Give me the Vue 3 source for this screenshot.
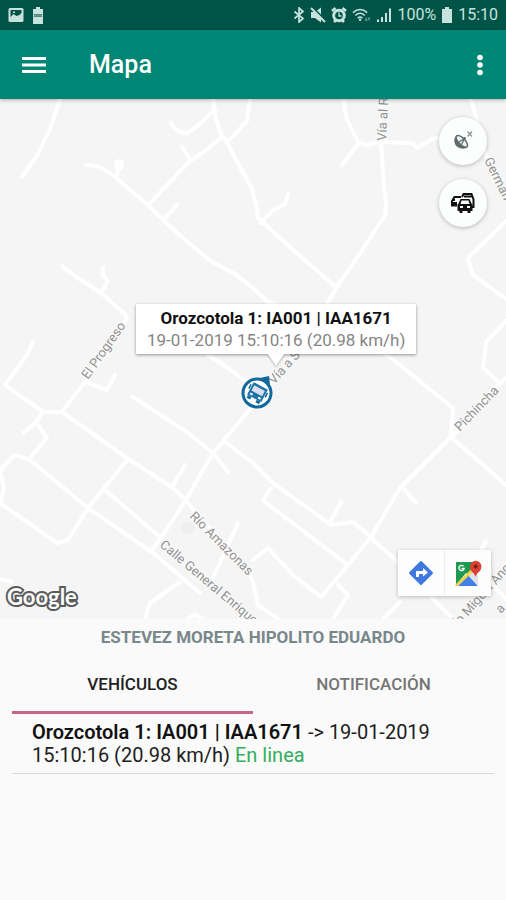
<template>
  <div class="screen">
    <div class="status-bar">
      <div class="status-group">
        <svg class="ic-16" viewBox="0 0 16 16">
          <path fill-rule="evenodd" d="M2 1h12a1.500 1.500 0 0 1 1.500 1.500v11A1.500 1.500 0 0 1 14 15H2a1.500 1.500 0 0 1-1.500-1.500v-11A1.500 1.500 0 0 1 2 1zM2.500 3v7l3-3 3 2 3-1 2-2V3zM5 4.500h2v1.500H5z" />
        </svg>
        <svg class="ic-battery-note" viewBox="0 0 12 17">
          <path d="M4 0h4v2h3v15H1V2h3z" />
          <path d="M2 7l2 3 2-3 2 3 2-3M2 10l2-3 2 3 2-3 2 3" fill="none" stroke="#3f7f75" stroke-width="1" />
        </svg>
      </div>
      <div class="status-group tight">
        <svg class="ic-bt" viewBox="0 0 12 16">
          <path d="M1.500 4.500l8.500 7L6 15V1l4 3.500-8.500 7" fill="none" stroke="currentColor" stroke-width="1.700" />
        </svg>
        <svg class="ic-16" viewBox="0 0 16 16">
          <path d="M1 5h4l6-4.500v15L5 11H1z" />
          <path d="M2 0l14 14" stroke="#005447" stroke-width="2" />
          <path d="M1 1l14 14" stroke="currentColor" stroke-width="2" />
        </svg>
        <svg class="ic-16" viewBox="0 0 16 16">
          <path d="M1 4l3.500-3M15 4l-3.500-3M3 15l2-2M13 15l-2-2" stroke="currentColor" stroke-width="2.600" />
          <circle cx="8" cy="8.500" r="6.800" />
          <circle cx="8" cy="8.500" r="3.800" fill="#005447" />
          <path d="M8 5.500v3.500h2.500" fill="none" stroke="currentColor" stroke-width="1.300" />
        </svg>
        <svg class="ic-wifi" viewBox="0 0 20 16">
          <g fill="none" stroke="currentColor" stroke-width="1.500">
            <path d="M1 5.500q7.500-6.500 15 0" />
            <path d="M3.500 8.500q5-4.500 10 0" />
            <path d="M6 11.300q2.500-2.200 5 0" />
          </g>
          <circle cx="8.500" cy="13" r="1.300" />
          <path d="M13.500 14l1.500-4 1.500 4zM16.500 10.500h3l-1.500 4z" opacity="0.500" />
        </svg>
        <svg class="ic-16" viewBox="0 0 16 16">
          <path d="M1 12.500h2V15H1zM5 10h2v5H5zM9 6h2v9H9zM13 1.500h2V15h-2z" />
        </svg>
        <span class="status-text">100%</span>
        <svg class="ic-battery" viewBox="0 0 12 16">
          <path d="M4 0h4v2h3v14H1V2h3z" />
        </svg>
        <span class="status-text">15:10</span>
      </div>
    </div>

    <header class="app-bar">
      <button class="bar-btn" aria-label="Menú">
        <svg width="24" height="18" viewBox="0 0 24 18">
          <path d="M0 1h24v3H0zM0 7.500h24v3H0zM0 14h24v3H0z" />
        </svg>
      </button>
      <h1 class="app-title">Mapa</h1>
      <button class="bar-btn" aria-label="Más opciones">
        <svg width="8" height="22" viewBox="0 0 8 22">
          <circle cx="4" cy="3.500" r="2.800" />
          <circle cx="4" cy="11" r="2.800" />
          <circle cx="4" cy="18.500" r="2.800" />
        </svg>
      </button>
    </header>

    <section class="map">
      <svg class="map-canvas" viewBox="0 0 506 520" preserveAspectRatio="xMidYMid slice">
        <circle cx="188" cy="429" r="6" fill="#eeeeee" />
        <g class="roads">
          <path v-for="(d, i) in roads" :key="i" :d="d" />
        </g>
        <ellipse cx="119" cy="66" rx="5" ry="6" fill="#fff" />
        <g class="labels">
          <text
            v-for="l in labels"
            :key="l.text"
            :transform="`translate(${l.x} ${l.y}) rotate(${l.angle})`"
          >{{ l.text }}</text>
        </g>
      </svg>

      <div class="round-actions">
        <button class="round-btn" aria-label="Señal satelital">
          <svg width="22" height="22" viewBox="0 0 22 22">
            <path d="M4.500 5.500C1 9 2 14 5 16.500s8 3 10.500.5z" fill="#5f6c6a" />
            <ellipse cx="9.800" cy="11.300" rx="3.300" ry="7.500" transform="rotate(-44 9.800 11.300)" fill="#eef2f2" stroke="#5f6c6a" stroke-width="1.500" />
            <path d="M7 12l5.500-3.500M9.500 14.500l3-6" stroke="#5f6c6a" stroke-width="1.300" />
            <circle cx="12.500" cy="8.500" r="1.400" fill="#5f6c6a" />
            <path d="M15.500 1.500l4.500 5M20 1.500l-4.500 5" stroke="#8b9391" stroke-width="1.300" />
          </svg>
        </button>
        <button class="round-btn" aria-label="Vehículos">
          <svg width="24" height="20" viewBox="0 0 24 20">
            <path d="M11 4l1.500-3h8l2 5.500V14H21M13 3.500h7.500M1 12V8l2.500-4H10M0 12.500h6M4 7H2" fill="none" stroke="#111" stroke-width="2" />
            <path d="M1 9h5v4H2z" fill="#111" />
            <path fill-rule="evenodd" d="M9.500 6h9l2 4.500 1 1V18h-2v2h-3v-2h-5v2h-3v-2h-2v-6.500l1-1zM10.500 7.500L9.500 11h9l-1-3.500zM9 13v2h3v-2zM16 13v2h3v-2z" fill="#111" />
          </svg>
        </button>
      </div>

      <div class="vehicle-pin">
        <div class="info-window">
          <strong>{{ vehicle.name }}</strong>
          <span>{{ vehicle.date }} {{ vehicle.time }} ({{ vehicle.speed }})</span>
        </div>
        <svg class="marker" viewBox="0 0 34 34">
          <path d="M20 3l9-2 1 10z" fill="#12689a" />
          <circle cx="17" cy="18" r="14" fill="#fff" stroke="#12689a" stroke-width="3" />
          <g transform="rotate(28 17 18)">
            <path d="M9 10h16v14H9z" fill="#1b73a8" />
            <path d="M11 12.500h12v6H11z" fill="#dbe0ee" />
            <path d="M7 13h1.500v5H7zM25.500 13H27v5h-1.500zM10 24h4v3h-4zM20 24h4v3h-4z" fill="#12689a" />
            <path d="M11 20.500h3v2h-3zM20 20.500h3v2h-3z" fill="#e8f2f8" />
          </g>
        </svg>
      </div>

      <div class="google">Google</div>

      <div class="map-toolbar">
        <button class="tool-btn" aria-label="Cómo llegar">
          <svg width="26" height="26" viewBox="0 0 26 26">
            <path d="M13 2L24 13 13 24 2 13z" fill="#3f78e0" stroke="#3f78e0" stroke-width="2" stroke-linejoin="round" />
            <path d="M8 17v-6h7V8l5 4.500-5 4V14h-4v3z" fill="#fff" />
          </svg>
        </button>
        <button class="tool-btn" aria-label="Abrir en Google Maps">
          <svg width="28" height="28" viewBox="0 0 28 28">
            <path d="M2 3h20v20L12 14 2 26z" fill="#1e9a50" />
            <path d="M1.500 27L13 15l11 12z" fill="#4180ea" />
            <path d="M24 27l-10-11 5-5 5 5z" fill="#dfe2e6" />
            <path d="M1.500 25.500L18.500 9l2 2.500L4 27H1.500z" fill="#f5d24a" />
            <path d="M9.500 7.200a2.600 2.600 0 1 0 .6 2.300H7.500" fill="none" stroke="#fff" stroke-width="1.400" />
            <path d="M21.500 18c-.5-4-5.500-5-5.500-10.500a5.700 5.700 0 0 1 11.400 0C27.400 13 22 14 21.500 18z" fill="#dc4034" />
            <circle cx="21.700" cy="7.500" r="2" fill="#76211d" />
          </svg>
        </button>
      </div>
    </section>

    <main class="panel">
      <h2 class="owner">ESTEVEZ MORETA HIPOLITO EDUARDO</h2>
      <nav class="tabs">
        <button
          v-for="tab in tabs"
          :key="tab"
          class="tab"
          :class="{ active: tab === activeTab }"
          @click="activeTab = tab"
        >{{ tab }}</button>
      </nav>
      <ul class="vehicle-list">
        <li class="vehicle-item">
          <strong>{{ vehicle.name }}</strong> -&gt; {{ vehicle.date }} {{ vehicle.time }} ({{ vehicle.speed }})
          <span class="online">{{ vehicle.status }}</span>
        </li>
      </ul>
    </main>
  </div>
</template>

<script setup>
import { ref } from 'vue'

const tabs = ['VEHÍCULOS', 'NOTIFICACIÓN']
const activeTab = ref(tabs[0])

const vehicle = {
  name: 'Orozcotola 1: IA001 | IAA1671',
  date: '19-01-2019',
  time: '15:10:16',
  speed: '20.98 km/h',
  status: 'En linea'
}

const roads = [
  'M60 0L50 30 38 55 22 78',
  'M86 66L98 67 110 74 148 106 163 121 185 141 212 163 235 175 253 189 268 203 330 225 390 258 453 309 451 338 506 386',
  'M148 106L165 88 190 62 205 52 222 38 216 20 213 0',
  'M171 24Q176 34 186 34 194 32 213 12',
  'M222 38L228 42 238 32 247 22 250 0',
  'M226 42L240 68 252 90 256 105 258 119 293 151 336 188',
  'M261 124L272 112 285 105 288 95',
  'M182 48L190 60',
  'M119 66L117 76',
  'M165 119L177 106',
  'M62 167L75 177 101 194 125 215 127 220',
  'M101 194L108 182 103 176 103 168',
  'M381 0V43L384 89 386 103 385 116 361 153 336 189 328 203 295 256 257 300 247 314 213 354 187 399 163 436 152 451',
  'M344 0L346 18 358 43 366 46 381 43 413 44 417 49 432 40 450 37',
  'M358 45L342 66',
  'M471 0L476 19 486 56 506 98',
  'M506 122L468 159 473 176 506 200',
  'M506 222L486 243 483 269 500 284 506 279',
  'M500 284L456 333 451 338 400 389 371 438 348 466 321 498 293 476 268 449 253 461',
  'M371 438L353 423 331 426 273 384 253 364 225 343',
  'M330 423L341 403',
  'M271 389L263 401 270 407 348 466',
  'M371 439L398 463 436 503 453 520',
  'M403 389L416 404',
  'M338 486L348 496 333 520',
  'M245 465L253 483 258 506 278 520',
  'M486 443L470 468',
  'M383 520L400 503',
  'M490 483L506 500',
  'M33 243L27 256 5 286 43 313 62 313 127 359 173 389 185 400 192 409 250 475',
  'M115 276L107 291 85 283 63 311',
  'M85 283L127 220',
  'M43 313L35 324 23 334',
  'M38 326L47 339 30 359',
  'M0 371L15 356 30 361 88 409 152 453 200 494',
  'M0 373L4 389 0 404 57 444 68 441 88 409 127 361',
  'M105 391L160 438',
  'M133 298L187 333 213 354 228 373',
  'M173 386L185 366',
  'M208 256L225 267 257 290',
  'M238 424L213 479',
  'M180 483L150 504 145 520',
  'M0 480L12 483',
  'M188 520L195 515 202 520'
]

const labels = [
  { text: 'El Progreso', x: 88, y: 281, angle: -55 },
  { text: 'Vía al Río', x: 386, y: 42, angle: -87 },
  { text: 'Vía a S', x: 274, y: 286, angle: -48 },
  { text: 'Pichincha', x: 460, y: 333, angle: -46 },
  { text: 'Río Amazonas', x: 189, y: 418, angle: 45 },
  { text: 'Calle General Enriquez', x: 159, y: 447, angle: 40 },
  { text: 'Germán', x: 484, y: 61, angle: 64 },
  { text: 'Río Miguel Ang', x: 453, y: 534, angle: -48 },
  { text: 'a', x: 501, y: 515, angle: -48 }
]
</script>

<style>
body {
  margin: 0;
  background: #fafafa;
}
</style>

<style scoped>
.screen {
  min-height: 100vh;
  background: #fafafa;
  font-family: Roboto, "Noto Sans", sans-serif;
  color: #212121;
}

button {
  border: 0;
  padding: 0;
  background: none;
  font-family: inherit;
  cursor: pointer;
}

svg {
  display: block;
}

.status-bar {
  height: 30px;
  padding: 0 8px;
  display: flex;
  align-items: center;
  justify-content: space-between;
  background: #005447;
  color: #c8e3dd;
}

.status-bar svg {
  fill: currentColor;
}

.status-group {
  display: flex;
  align-items: center;
  gap: 8px;
}

.status-group.tight {
  gap: 5px;
}

.ic-16 {
  width: 16px;
  height: 16px;
}

.ic-bt,
.ic-battery {
  width: 12px;
  height: 16px;
}

.ic-battery-note {
  width: 12px;
  height: 17px;
}

.ic-wifi {
  width: 19px;
  height: 16px;
}

.status-text {
  font-size: 16px;
  line-height: 30px;
}

.app-bar {
  position: relative;
  z-index: 1;
  height: 69px;
  padding: 0 22px;
  display: flex;
  align-items: center;
  background: #008675;
  box-shadow: 0 1px 4px rgba(0, 0, 0, 0.3);
}

.bar-btn {
  fill: #fff;
}

.app-title {
  flex: 1;
  margin: 0 0 0 43px;
  color: #fff;
  font-size: 25px;
  font-weight: 500;
  line-height: 32px;
}

.map {
  position: relative;
  aspect-ratio: 506 / 520;
  overflow: hidden;
  background: #f5f5f5;
}

.map-canvas {
  width: 100%;
  height: 100%;
}

.roads path {
  fill: none;
  stroke: #fff;
  stroke-width: 4;
  stroke-linecap: round;
  stroke-linejoin: round;
}

.labels text {
  font-size: 13px;
  fill: #929292;
  stroke: #f9f9f9;
  stroke-width: 3px;
  paint-order: stroke;
}

.round-actions {
  position: absolute;
  top: 18px;
  right: 19px;
  display: flex;
  flex-direction: column;
  gap: 14px;
}

.round-btn {
  width: 48px;
  height: 48px;
  border-radius: 50%;
  display: grid;
  place-items: center;
  background: #fcfefe;
  box-shadow: 0 1px 4px rgba(0, 0, 0, 0.25);
}

.vehicle-pin {
  position: absolute;
  left: calc(50% - 117px);
  top: 205px;
  display: flex;
  flex-direction: column;
  gap: 21px;
}

.info-window {
  position: relative;
  padding: 3px 11px;
  display: flex;
  flex-direction: column;
  align-items: center;
  background: #fff;
  box-shadow: 0 1px 3px rgba(0, 0, 0, 0.4);
  font-size: 17px;
  line-height: 22px;
  white-space: nowrap;
}

.info-window::after {
  content: "";
  position: absolute;
  top: 100%;
  left: 50%;
  margin-left: -8px;
  border: 8px solid transparent;
  border-top: 12px solid #fff;
  border-bottom: 0;
  filter: drop-shadow(0 1px 1px rgba(0, 0, 0, 0.3));
}

.info-window strong {
  color: #111;
}

.info-window span {
  color: #858585;
}

.marker {
  width: 34px;
  height: 34px;
  margin-left: 104px;
}

.google {
  position: absolute;
  left: 7px;
  bottom: 8px;
  color: #fff;
  font-family: Lato, sans-serif;
  font-size: 22px;
  font-weight: 700;
  line-height: 28px;
  -webkit-text-stroke: 4px #5a5a5a;
  paint-order: stroke fill;
}

.map-toolbar {
  position: absolute;
  right: 15px;
  bottom: 23px;
  display: flex;
  gap: 1px;
  background: #ececec;
  box-shadow: 0 1px 4px rgba(0, 0, 0, 0.25);
}

.tool-btn {
  width: 46px;
  height: 46px;
  display: grid;
  place-items: center;
  background: #fdfdfd;
}

.panel {
  padding: 6px 12px;
}

.owner {
  margin: 0;
  text-align: center;
  color: #78888a;
  font-size: 17px;
  font-weight: 700;
  line-height: 24px;
}

.tabs {
  display: flex;
}

.tab {
  flex: 1;
  height: 65px;
  padding-top: 8px;
  border-bottom: 3px solid transparent;
  color: #757575;
  font-size: 17px;
  font-weight: 500;
}

.tab.active {
  color: #212121;
  border-bottom-color: #c9658a;
}

.vehicle-list {
  margin: 0;
  padding: 0;
  list-style: none;
}

.vehicle-item {
  padding: 7px 20px 6px;
  border-bottom: 1px solid #d8d8d8;
  font-size: 20px;
  line-height: 23px;
}

.vehicle-item strong {
  color: #111;
  font-weight: 600;
}

.online {
  color: #34ad5c;
}
</style>
